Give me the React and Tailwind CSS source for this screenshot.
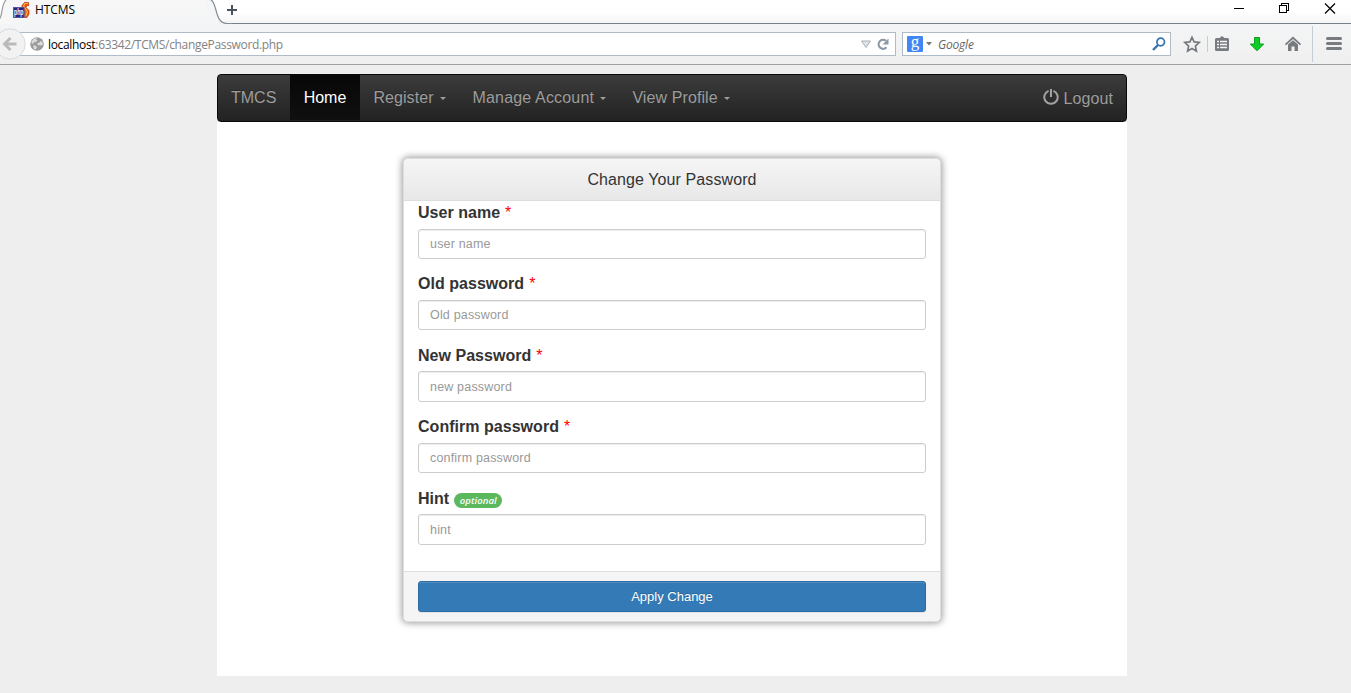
import React from "react";

const chromeFont = "font-['Open_Sans','Noto_Sans',sans-serif]";

function TabStrip() {
  return (
    <div className="flex h-6 shrink-0 bg-gradient-to-b from-white from-50% to-[#f4f4f4] text-black">
      <svg width="10" height="24" viewBox="0 0 10 24" className="shrink-0">
        <path d="M0 19 C2 14 2 3 6 0 H10 V24 H0Z" fill="#f7f7f7" />
        <path d="M0 18.5 C2.500 14 1.500 4 6 0" fill="none" stroke="#9a9fa6" strokeWidth="1.200" />
      </svg>
      <div className="flex w-[196px] items-start bg-gradient-to-b from-[#f7f7f7] to-[#f4f5f6]">
        <svg width="18" height="18" viewBox="0 0 18 18" className="ml-[2px] mt-px">
          <path d="M16.500 1.500H12.500L10 4.500V7L12.500 10.500V16.500H15L17 13V9.500L14 6.500L15 4.500H16.800Z" fill="#ea5414" stroke="#b5300f" strokeWidth=".7" />
          <path d="M16 2.500H13L11.500 5L15.300 10.500L14 15" fill="none" stroke="#ffb52e" strokeWidth="1.200" />
          <rect x="1.500" y="6.500" width="10.500" height="10" fill="#24237e" stroke="#5554a0" />
          <text x="2" y="14" textLength="9.500" lengthAdjust="spacingAndGlyphs" fontSize="8.500" fontWeight="700" fill="white" className="font-['Liberation_Sans',sans-serif]">php</text>
        </svg>
        <span className="ml-[5px] mt-px text-[12px] leading-[18px] tracking-[-0.1px]">HTCMS</span>
      </div>
      <svg width="26" height="24" viewBox="0 0 26 24" className="shrink-0">
        <path d="M0 0H4C11 2 9 23.500 22 23.500H26V24H0Z" fill="#f4f5f6" />
        <path d="M4.500 -.5C12 3 8 23.500 21 23.500H26" fill="none" stroke="#858d96" strokeWidth="1.200" />
      </svg>
      <div className="flex flex-1 items-start border-b border-[#767f8a]">
        <svg width="12" height="12" viewBox="0 0 12 12" className="-ml-[5px] mt-1">
          <path d="M0 6H10M5 1V11" stroke="#49535f" strokeWidth="2" />
        </svg>
        <svg width="105" height="18" viewBox="0 0 105 18" className="ml-auto mr-[14px]" fill="none" stroke="black" shapeRendering="crispEdges">
          <path d="M2 8.500H12M47.500 5.500H54.500V12.500H47.500ZM49.500 5V3.500H56.500V10.500H55" />
          <path d="M93 3.500L103 13.500M103 3.500L93 13.500" shapeRendering="auto" strokeWidth="1.200" />
        </svg>
      </div>
    </div>
  );
}

function AddressBar() {
  return (
    <div className="flex h-[41px] shrink-0 items-start border-b border-[#a0a1a3] bg-gradient-to-b from-[#f4f5f6] to-[#efefef]">
      <svg width="26" height="40" viewBox="0 0 26 40" className="relative z-10 -mr-3 shrink-0">
        <circle cx="10" cy="20" r="15.200" fill="#f2f2f2" stroke="#d8d9da" />
        <path d="M16.500 20H5M10.500 14L4.500 20L10.500 26" fill="none" stroke="#b9babb" strokeWidth="3" />
      </svg>
      <div className="mt-2 flex h-6 w-[882px] items-center border border-[#b0bbc8] bg-white">
        <svg width="14" height="14" viewBox="0 0 14 14" className="ml-[15px]">
          <circle cx="7" cy="7" r="6.800" fill="#9c9c9c" />
          <path d="M1.500 4.500L4 1.500L7 1L6 2.500L7.500 3.500L6 5L4 5L3 7L1.500 6ZM7 6.500L9.500 5.500L10.500 4L12.300 5L12.800 7.500L11 8.500L9.500 8L8.500 8.500ZM3 8.500L5.500 8.500L7 10.500L5.500 12.500L4 12L3.500 10Z" fill="#dcdcdc" />
        </svg>
        <span className="ml-[4px] mt-px w-[300px] whitespace-nowrap text-[12px] leading-4 tracking-[-0.33px] text-[#828282]">
          <span className="text-black">localhost</span>:63342/TCMS/changePassword.php
        </span>
        <svg width="30" height="16" viewBox="0 0 30 16" className="ml-auto mr-[5px]">
          <path d="M1.500 5H10.500L6 11.500Z" fill="#dfe3e8" stroke="#a7b0ba" />
          <path d="M26.500 11.300A4.500 4.500 0 1 1 26 4.800" fill="none" stroke="#8b98a5" strokeWidth="2.200" />
          <path d="M28.500 2.500V8.500H22.500Z" fill="#8b98a5" />
        </svg>
      </div>
      <div className="ml-[6px] mt-2 flex h-6 w-[269px] items-center border border-[#b0bbc8] bg-white">
        <span className="ml-1 flex size-4 items-center justify-center rounded-[1px] bg-[#4285f4] pb-1 font-['Liberation_Serif',serif] text-[17px] leading-4 text-white">g</span>
        <svg width="6" height="4" viewBox="0 0 6 4" className="ml-[3px]"><path d="M0 0H6L3 3.500Z" fill="#777" /></svg>
        <span className="ml-[6px] mt-px text-[12px] italic leading-4 tracking-[-0.2px] text-[#666]">Google</span>
        <svg width="14" height="14" viewBox="0 0 14 14" className="ml-auto mr-[4px]" fill="none" stroke="#3474b5">
          <circle cx="8.700" cy="5" r="3.800" strokeWidth="1.700" />
          <path d="M6 8L1 13" strokeWidth="2.400" />
        </svg>
      </div>
      <svg width="180" height="40" viewBox="0 0 180 40" className="shrink-0">
        <path d="M21 13.300L23.100 17.900L28.200 18.500L24.400 22L25.400 27L21 24.500L16.600 27L17.600 22L13.800 18.500L18.900 17.900Z" fill="none" stroke="#777b80" strokeWidth="1.700" />
        <path d="M36.500 12V28" stroke="#c5cbd2" />
        <path d="M44 15.500Q44 14 45.500 14H48.500L51 12L53.500 14H56.500Q58 14 58 15.500V25.500Q58 27 56.500 27H45.500Q44 27 44 25.500Z" fill="#777b80" />
        <path d="M46 17.500H48M49 17.500H56M46 20.500H48M49 20.500H56M46 23.500H48M49 23.500H56" stroke="#f4f4f4" strokeWidth="1.600" />
        <path d="M83.500 13.500H88.500V20H92.700L86 26.800L79.300 20H83.500Z" fill="#0bcf24" stroke="#119a22" />
        <path d="M114.500 20.700L122 13.800L129.500 20.700" fill="none" stroke="#777b80" strokeWidth="1.800" />
        <path d="M117 20.500L122 16.200L127 20.500V27H123.500V22.500H120.500V27H117Z" fill="#777b80" />
        <path d="M141.500 2V38" stroke="#c4ccd6" />
        <path d="M156.500 14.500H169.500M156.500 19.500H169.500M156.500 24.500H169.500" stroke="#777b80" strokeWidth="3" strokeLinecap="round" />
      </svg>
    </div>
  );
}

function Caret() {
  return <span className="ml-[6px] mt-[2px] border-x-[3.500px] border-t-[3.500px] border-x-transparent border-t-[#9d9d9d]" />;
}

function Navbar() {
  return (
    <nav className="flex h-12 items-stretch rounded-[4px] border border-[#080808] bg-gradient-to-b from-[#3c3c3c] to-[#222] pb-px text-[16px] leading-[22px] text-[#9d9d9d] [text-shadow:0_-1px_0_rgba(0,0,0,0.25)]">
      <a className="flex w-[72px] items-center pl-[13px]">TMCS</a>
      <a className="flex w-[70px] items-center justify-center bg-gradient-to-b from-[#080808] to-[#0f0f0f] text-white">Home</a>
      <a className="flex w-[99px] items-center pl-[13.400px] tracking-[0.08px]">Register<Caret /></a>
      <a className="flex w-[160px] items-center whitespace-nowrap pl-[13.500px] tracking-[0.17px]">Manage Account<Caret /></a>
      <a className="flex items-center whitespace-nowrap pl-[13.400px] tracking-[0.1px]">View Profile<Caret /></a>
      <a className="ml-auto flex items-center pr-[13px] pt-[2px] tracking-[0.08px]">
        <svg width="16" height="16" viewBox="0 0 16 16" className="mb-[3px] mr-[5px]" fill="none" stroke="#a3a3a3" strokeWidth="2">
          <path d="M5.600 1.900A6.700 6.700 0 1 0 10.400 1.900M8 0V8" />
        </svg>
        Logout
      </a>
    </nav>
  );
}

const fields = [
  { label: "User name", placeholder: "user name" },
  { label: "Old password", placeholder: "Old password" },
  { label: "New Password", placeholder: "new password" },
  { label: "Confirm password", placeholder: "confirm password" },
  { label: "Hint", placeholder: "hint", optional: true },
];

function Field({ label, placeholder, optional }) {
  return (
    <div className="h-[71.400px]">
      <label className="flex h-[27.600px] items-start text-[16px] font-bold leading-[23px] tracking-[0.03px]">
        {label}
        {optional ? (
          <span className="ml-[5px] mt-[6px] flex h-[15px] w-[48px] items-center justify-center rounded-full bg-[#5cb85c] pt-px font-['Open_Sans',sans-serif] text-[9.500px] font-semibold italic leading-none tracking-[0.05px] text-white">optional</span>
        ) : (
          <span className="ml-[5px] font-normal text-[#f00]">*</span>
        )}
      </label>
      <input
        placeholder={placeholder}
        className="block h-[30.450px] w-full rounded-[3px] border border-[#ccc] bg-white px-[11px] pt-[0.400px] text-[12.500px] tracking-[0.18px] shadow-[inset_0_1px_1px_rgba(0,0,0,0.075)] placeholder:text-[#999]"
      />
    </div>
  );
}

export default function App() {
  return (
    <div className={`flex h-[693px] w-[1351px] flex-col overflow-hidden bg-[#eee] ${chromeFont}`}>
      <TabStrip />
      <AddressBar />
      <main className="ml-[217px] mt-[9px] h-[602px] w-[910px] bg-white font-['Liberation_Sans',Arial,sans-serif] text-[#333]">
        <div className="bg-[#eee]"><Navbar /></div>
        <section className="ml-[186px] mt-[36px] flex h-[464px] w-[538px] flex-col overflow-hidden rounded-[5px] border border-[#ddd] bg-white shadow-[0_0_7px_1px_rgba(0,0,0,0.4)]">
          <h1 className="h-[42px] shrink-0 border-b border-[#ddd] bg-gradient-to-b from-[#f5f5f5] to-[#e8e8e8] text-center text-[16px] leading-[41px] tracking-[0.1px]">Change Your Password</h1>
          <form className="flex-1 px-[14px]">
            {fields.map((f) => <Field key={f.label} {...f} />)}
          </form>
          <div className="h-[50px] shrink-0 border-t border-[#ddd] bg-[#f5f5f5] px-[14px] pt-[9px]">
            <button className="h-[31px] w-full rounded-[3px] border border-[#2e6da4] bg-[#337ab7] text-[13px] text-white shadow-[inset_0_1px_0_rgba(255,255,255,0.15),0_1px_1px_rgba(0,0,0,0.075)] [text-shadow:0_-1px_0_rgba(0,0,0,0.2)]">Apply Change</button>
          </div>
        </section>
      </main>
    </div>
  );
}
